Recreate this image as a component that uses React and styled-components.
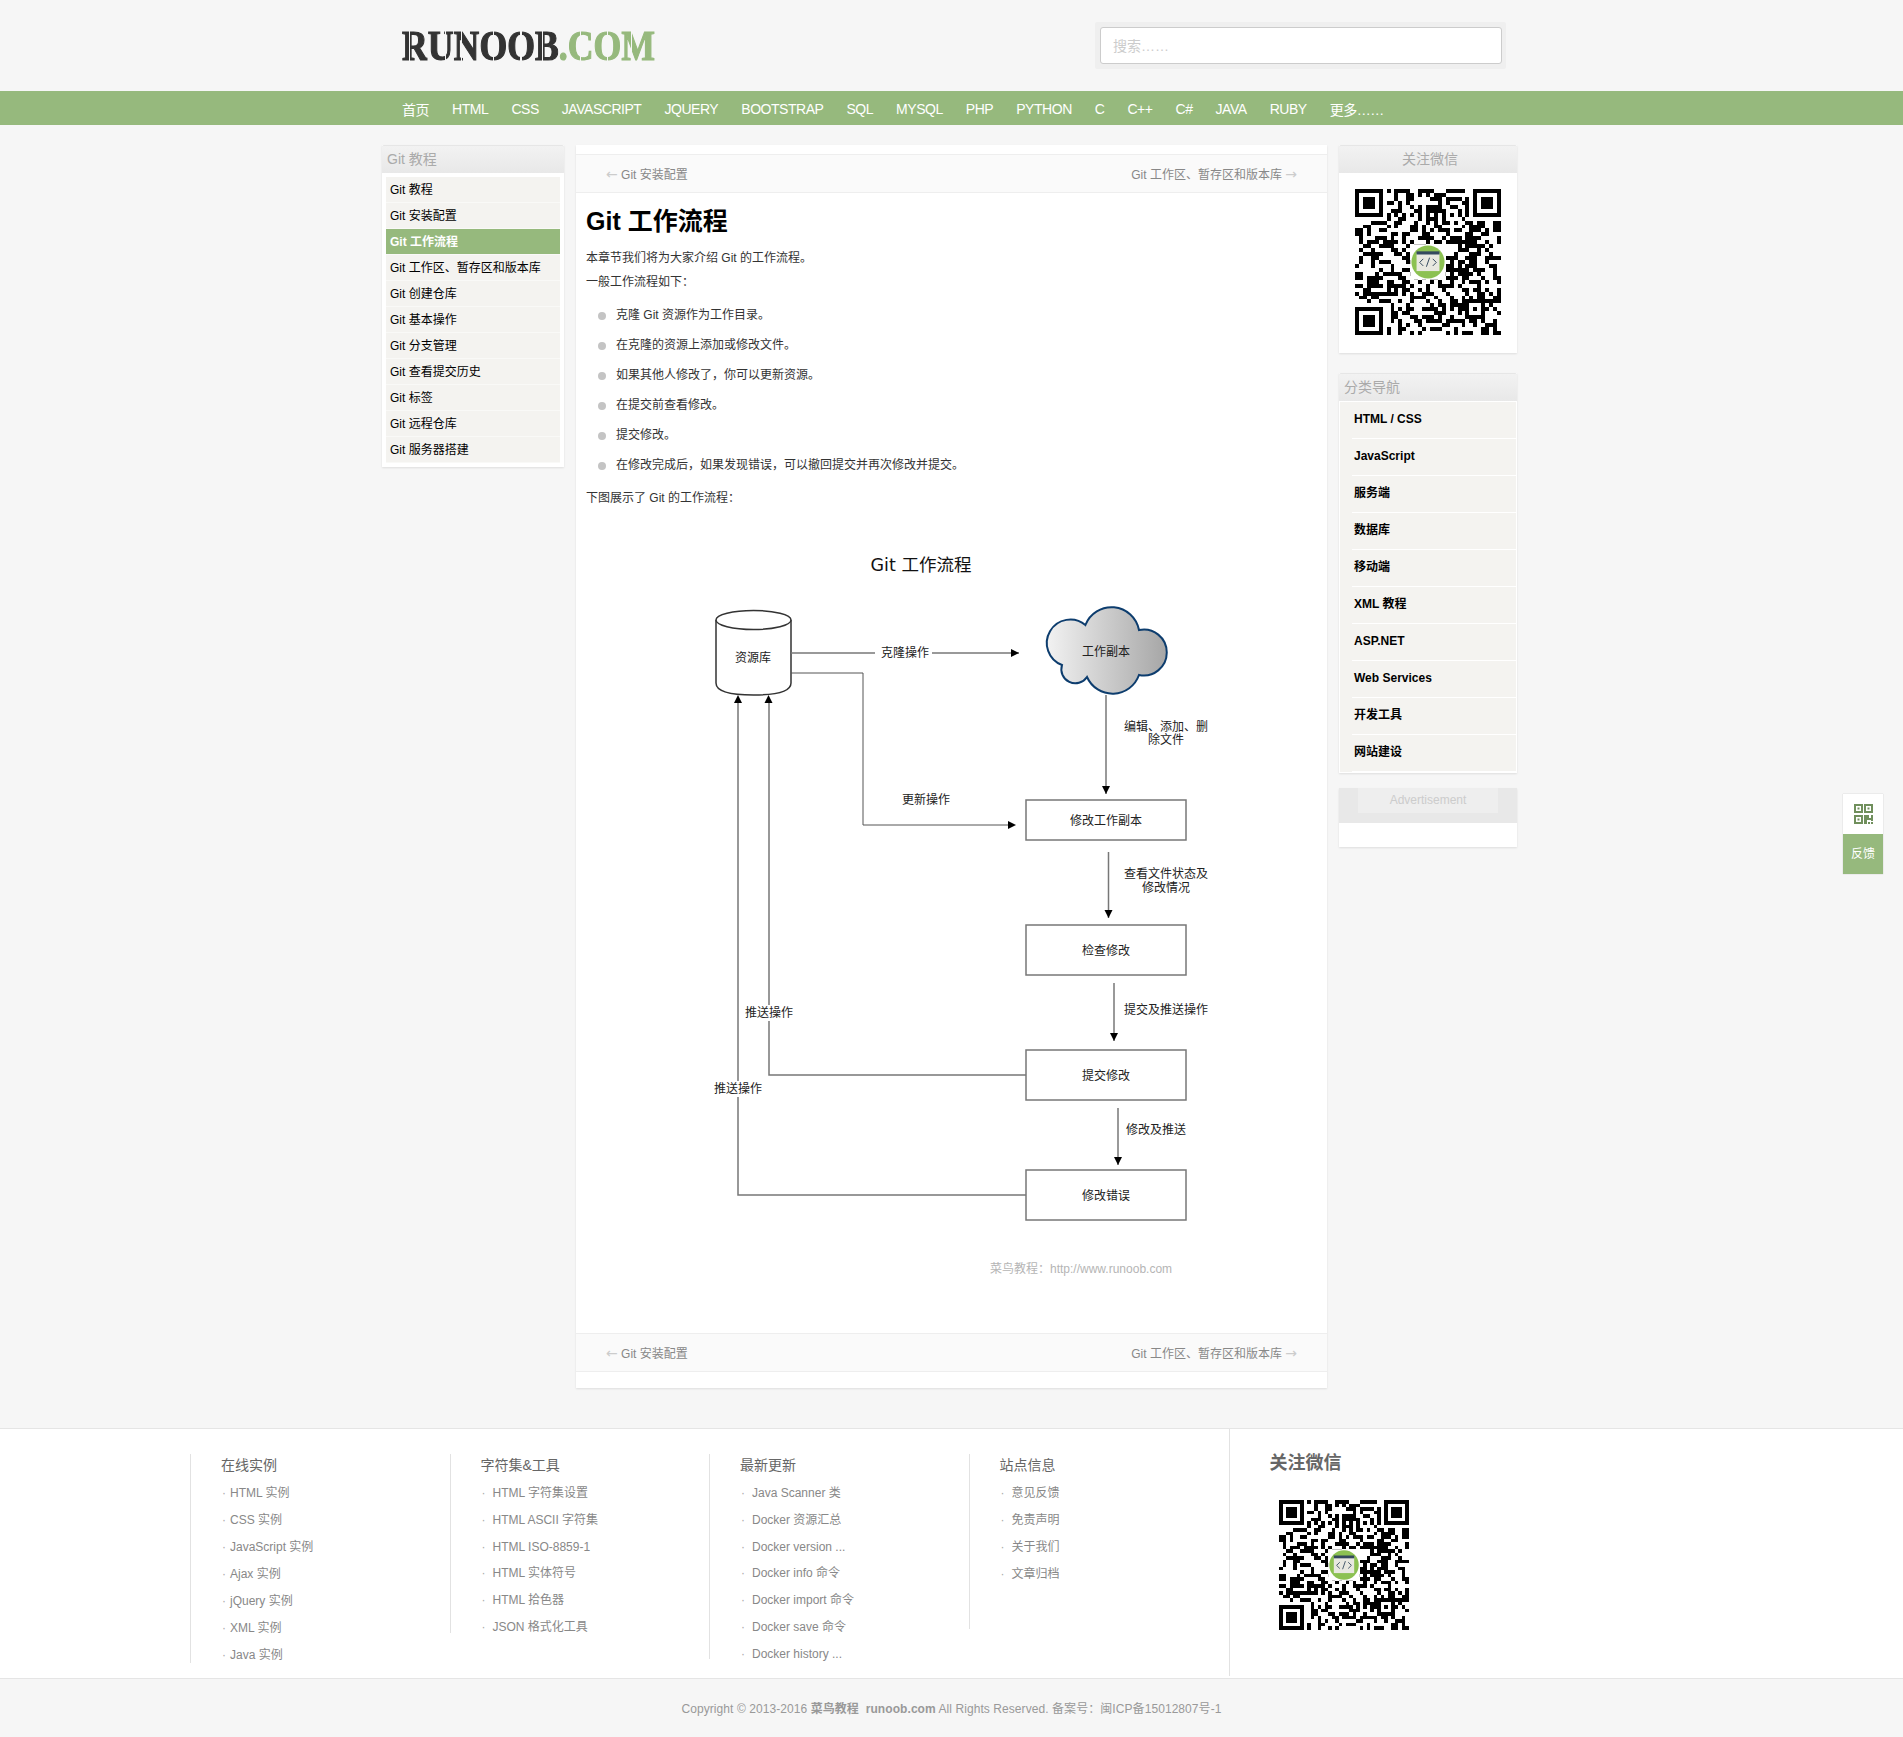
import React from 'react';
import styled, { createGlobalStyle } from 'styled-components';

const GREEN = '#96b97d';
const SANS = '"Liberation Sans", Arial, "Noto Sans CJK SC", sans-serif';

const GlobalStyle = createGlobalStyle`
  html, body {
    margin: 0;
    padding: 0;
    background: #f6f6f6;
    font-family: ${SANS};
    font-size: 12px;
    color: #333;
  }
  ul { margin: 0; padding: 0; list-style: none; }
`;

const Page = styled.div`
  width: 1903px;
  height: 1737px;
  overflow: hidden;
`;

const Masthead = styled.header`
  height: 91px;
  display: flex;
  align-items: flex-start;
  padding-left: 402px;
`;

const Logo = styled.div`
  width: 252px;
  height: 91px;
  line-height: 93px;
  font-family: "Liberation Serif", serif;
  font-weight: 700;
  font-size: 42px;
  color: #333;
  white-space: nowrap;
  -webkit-text-stroke: 1.2px currentColor;
  transform: scaleX(0.85);
  transform-origin: left center;
`;

const LogoGreen = styled.span`
  color: ${GREEN};
`;

// stencil look: a thin slit cut through each letter at $cut percent of its width
const LogoLetter = styled.span`
  display: inline-block;
  mask-image: linear-gradient(
    to right,
    #000 ${p => p.$cut - 2}%,
    transparent ${p => p.$cut - 2}%,
    transparent ${p => p.$cut + 2}%,
    #000 ${p => p.$cut + 2}%
  );
`;

const SearchBox = styled.div`
  margin: 22px 0 0 441px;
  width: 411px;
  height: 47px;
  box-sizing: border-box;
  padding: 5px 4px 5px 5px;
  background: #efefef;
  border-radius: 2px;
`;

const SearchInput = styled.input`
  width: 100%;
  height: 37px;
  box-sizing: border-box;
  padding: 0 12px;
  border: 1px solid #ccc;
  border-radius: 3px;
  background: #fff;
  font-family: ${SANS};
  font-size: 14px;

  &::placeholder {
    color: #ccc;
  }
`;

const NavBar = styled.nav`
  height: 34px;
  background: ${GREEN};
  display: flex;
  gap: 23px;
  padding-left: 402px;
  align-items: center;
`;

const NavLink = styled.a`
  font-size: 14px;
  letter-spacing: -0.46px;
  color: #fff;
  padding-top: 2px;
  white-space: nowrap;
`;

const Main = styled.main`
  margin: 20px 0 0 382px;
  display: grid;
  grid-template-columns: 182px 751px 178px;
  column-gap: 12px;
  align-items: start;
`;

const Column = styled.aside`
  display: flex;
  flex-direction: column;
  gap: 20px;
`;

const Card = styled.section`
  background: #fff;
  box-shadow: 0 1px 2px rgba(0, 0, 0, 0.1);
`;

const CardTitle = styled.h4`
  margin: 0;
  height: 28px;
  line-height: 27px;
  box-sizing: border-box;
  padding: 0 5px;
  border-top: 1px solid #e6e6e6;
  border-radius: 2px 2px 0 0;
  background: linear-gradient(#f2f2f2, #e8e8e8);
  font-size: 14px;
  font-weight: 400;
  color: #aaa;
  text-align: ${p => (p.$center ? 'center' : 'left')};
  text-indent: ${p => (p.$center ? 4 : 0)}px;
`;

const TocList = styled.ul`
  padding: 4px;
`;

const TocItem = styled.li`
  height: 26px;
  line-height: 26px;
  box-sizing: border-box;
  padding-left: 4px;
  border-bottom: 1px solid #f9f9f7;
  background: ${p => (p.$active ? GREEN : '#f4f3f0')};
  color: ${p => (p.$active ? '#fff' : '#000')};
  font-weight: ${p => (p.$active ? 700 : 400)};
`;

const Article = styled.article`
  background: #fff;
  height: 1243px;
  padding-top: 9px;
  box-sizing: border-box;
  box-shadow: 0 1px 2px rgba(0, 0, 0, 0.1);
`;

const PageNav = styled.div`
  height: 39px;
  box-sizing: border-box;
  padding: 0 30px;
  display: flex;
  justify-content: space-between;
  align-items: center;
  background: #fafafa;
  border-top: 1px solid #eee;
  border-bottom: 1px solid #eee;
  color: #888;
`;

const NavArrow = styled.i`
  font-family: "DejaVu Sans", sans-serif;
  font-style: normal;
  font-size: 14px;
  line-height: 12px;
  color: #ccc;
`;

const ArticleBody = styled.div`
  padding: 0 10px;
`;

const Heading = styled.h1`
  margin: 10px 0 0;
  height: 36px;
  line-height: 36px;
  font-size: 25px;
  font-weight: 700;
  color: #000;
`;

const Para = styled.p`
  margin: 0;
  height: 24px;
  line-height: 24px;
`;

const IntroPara = styled(Para)`
  margin-top: 7px;
`;

const Steps = styled.ul`
  margin: 6px 0;
`;

const Step = styled.li`
  height: 30px;
  line-height: 30px;
  padding-left: 30px;
  position: relative;

  &::before {
    content: '';
    position: absolute;
    left: 12px;
    top: 12px;
    width: 8px;
    height: 8px;
    border-radius: 50%;
    background: #c4c4c4;
  }
`;

const Diagram = styled.svg`
  display: block;
  margin: 13px 0 0 -10px;
  width: 751px;
  height: 810px;
`;

const ChartText = styled.text.attrs({ dy: 1 })`
  font-family: "Liberation Sans", "Noto Sans CJK SC", sans-serif;
  font-size: 12px;
  fill: #222;
  text-anchor: middle;
  dominant-baseline: central;
`;

const QrFrame = styled.div`
  padding: ${p => p.$pad};
  display: flex;
`;

const CatList = styled.ul`
  padding: 1px 1px 1px;
`;

const CatItem = styled.li`
  padding-left: 12px;
  background: #f4f3f0;
`;

const CatLink = styled.a`
  display: block;
  height: 37px;
  line-height: 35px;
  box-sizing: border-box;
  padding-left: 2px;
  border-bottom: 1px solid #fff;
  font-weight: 700;
  color: #000;
`;

const AdCard = styled(Card)`
  margin-top: -5px;
  height: 59px;
`;

const AdHead = styled.div`
  height: 35px;
  background: #e8e8e8;
  display: flex;
  justify-content: center;
`;

const AdLabel = styled.div`
  width: 140px;
  height: 25px;
  line-height: 25px;
  background: #eeeeee;
  color: #ccc;
  text-align: center;
`;

const FloatDock = styled.div`
  position: absolute;
  left: 1843px;
  top: 794px;
  width: 40px;
  box-shadow: 0 0 1px rgba(0, 0, 0, 0.25);
`;

const DockQr = styled.div`
  height: 40px;
  background: #fff;
  display: flex;
  align-items: center;
  justify-content: center;
`;

const DockBtn = styled.div`
  height: 40px;
  line-height: 40px;
  background: ${GREEN};
  color: #fff;
  text-align: center;
`;

const Footer = styled.footer`
  margin-top: 40px;
  height: 251px;
  box-sizing: border-box;
  background: #fff;
  border-top: 1px solid #e5e5e5;
  border-bottom: 1px solid #e5e5e5;
  padding-left: 190px;
  display: flex;
  align-items: flex-start;
`;

const LinkCol = styled.div`
  width: 259px;
  height: ${p => p.$height}px;
  margin-top: 25px;
  box-sizing: border-box;
  padding-left: 30px;
  border-left: 1px solid #e2e2e2;
  margin-right: ${p => p.$gap || 0}px;
`;

const LinkTitle = styled.h4`
  margin: 0 0 4px;
  height: 22px;
  line-height: 22px;
  font-size: 14px;
  font-weight: 400;
  color: #666;
`;

const LinkItem = styled.li`
  height: ${p => (p.$ascii ? 26 : 27)}px;
  line-height: ${p => (p.$ascii ? 26 : 27)}px;
  padding-left: ${p => p.$indent}px;
  color: #888;
  position: relative;
  white-space: nowrap;

  &::before {
    content: '·';
    position: absolute;
    left: 1px;
    color: #aaa;
  }
`;

const WechatCol = styled.div`
  width: 300px;
  height: 247px;
  box-sizing: border-box;
  padding-left: 40px;
  border-left: 1px solid #e2e2e2;
`;

const WechatTitle = styled.h4`
  margin: 21px 0 0;
  height: 26px;
  line-height: 26px;
  font-size: 18px;
  font-weight: 700;
  color: #666;
`;

const Copyright = styled.div`
  height: 58px;
  line-height: 61px;
  text-align: center;
  letter-spacing: 0.07px;
  color: #999;

  b {
    font-weight: 700;
  }
`;

// finder + timing + seeded noise, the real code can't be read back from a screenshot anyway
const buildQr = () => {
  const n = 37;
  let s = 20160412;
  const rnd = () => {
    s = (s * 1664525 + 1013904223) % 4294967296;
    return (s >>> 16) & 1;
  };
  const cells = [];
  for (let y = 0; y < n; y++) {
    const row = [];
    for (let x = 0; x < n; x++) row.push(rnd());
    cells.push(row);
  }
  const finder = (ox, oy) => {
    for (let y = -1; y < 8; y++) {
      for (let x = -1; x < 8; x++) {
        const cx = ox + x;
        const cy = oy + y;
        if (cx < 0 || cy < 0 || cx >= n || cy >= n) continue;
        const ring = x === 0 || x === 6 || y === 0 || y === 6;
        const core = x >= 2 && x <= 4 && y >= 2 && y <= 4;
        const inside = x >= 0 && x <= 6 && y >= 0 && y <= 6;
        cells[cy][cx] = inside && (ring || core) ? 1 : 0;
      }
    }
  };
  finder(0, 0);
  finder(n - 7, 0);
  finder(0, n - 7);
  for (let i = 8; i < n - 8; i++) {
    cells[6][i] = (i + 1) % 2;
    cells[i][6] = (i + 1) % 2;
  }
  for (let y = -2; y <= 2; y++) {
    for (let x = -2; x <= 2; x++) {
      cells[30 + y][30 + x] = Math.max(Math.abs(x), Math.abs(y)) !== 1 ? 1 : 0;
    }
  }
  let d = '';
  cells.forEach((row, y) => row.forEach((on, x) => {
    if (on) d += `M${x} ${y}h1v1h-1z`;
  }));
  return d;
};

const QR_PATH = buildQr();

const QrCode = ({ size }) => (
  <svg width={size} height={size} viewBox="0 0 37 37" shapeRendering="crispEdges">
    <path d={QR_PATH} fill="#000" />
    <g shapeRendering="auto">
      <rect x="14" y="14" width="9" height="9" rx="1" fill="#fff" />
      <circle cx="18.5" cy="18.5" r="4.2" fill="#8cc152" />
      <rect x="15.6" y="16.3" width="5.8" height="4.5" fill="#e8e8e0" />
      <rect x="15.6" y="15.8" width="5.8" height="0.8" fill="#34495e" />
      <path d="M17.3 17.7l-.9.9.9.9M19.7 17.7l.9.9-.9.9M18.9 17.4l-.8 2.3" fill="none" stroke="#34495e" strokeWidth="0.25" />
    </g>
  </svg>
);

const Arrow = ({ x1, y1, x2, y2, width = 1.5, color = '#777' }) => {
  const down = y2 > y1;
  const up = y2 < y1;
  let head;
  if (down) head = `${x2 - 4},${y2 - 8} ${x2 + 4},${y2 - 8} ${x2},${y2}`;
  else if (up) head = `${x2 - 4},${y2 + 8} ${x2 + 4},${y2 + 8} ${x2},${y2}`;
  else head = `${x2 - 8},${y2 - 4} ${x2 - 8},${y2 + 4} ${x2},${y2}`;
  return (
    <g>
      <line x1={x1} y1={y1} x2={x2} y2={y2} stroke={color} strokeWidth={width} />
      <polygon points={head} fill="#000" />
    </g>
  );
};

const FlowBox = ({ y, h, label }) => (
  <g>
    <rect x="1026" y={y} width="160" height={h} fill="#fff" stroke="#777" strokeWidth="1.5" />
    <ChartText x="1106" y={y + h / 2}>{label}</ChartText>
  </g>
);

const Gap = ({ x, y, w, h }) => <rect x={x} y={y} width={w} height={h} fill="#fff" />;

const FlowChart = () => (
  <Diagram viewBox="576 523 751 810">
    <defs>
      <linearGradient id="cloudFill" x1="0" x2="1" y1="0" y2="0">
        <stop offset="0" stopColor="#f2f2f2" />
        <stop offset="1" stopColor="#a6a6a6" />
      </linearGradient>
    </defs>
    <text x="921" y="565" textAnchor="middle" dominantBaseline="central" fontFamily='"DejaVu Sans", "Noto Sans CJK SC", sans-serif' fontSize="17.5" fill="#111">Git 工作流程</text>

    <path d="M716 620V683Q716 695 753.5 695T791 683V620" fill="#fff" stroke="#333" strokeWidth="1.5" />
    <ellipse cx="753.5" cy="620" rx="37.5" ry="9.5" fill="#fff" stroke="#333" strokeWidth="1.5" />
    <ChartText x="753" y="657">资源库</ChartText>

    <Arrow x1={791} y1={653} x2={1019} y2={653} />
    <Gap x={875} y={645} w={57} h={16} />
    <ChartText x="905" y="652">克隆操作</ChartText>

    <path d="M791 673H863V825H1010" fill="none" stroke="#555" strokeWidth="1" />
    <polygon points="1008,821 1008,829 1016,825" fill="#000" />
    <ChartText x="926" y="799">更新操作</ChartText>

    <path d="M1085.4 625A28 28 0 0 1 1139 630A23 23 0 1 1 1139 675A28 28 0 0 1 1087 677A14 14 0 0 1 1062 665A23.5 23.5 0 1 1 1085.4 625Z" fill="url(#cloudFill)" stroke="#0d3d6e" strokeWidth="2" />
    <ChartText x="1106" y="651">工作副本</ChartText>

    <Arrow x1={1106} y1={695} x2={1106} y2={794} />
    <ChartText x="1166" y="726">编辑、添加、删</ChartText>
    <ChartText x="1166" y="739">除文件</ChartText>

    <FlowBox y={800} h={40} label="修改工作副本" />
    <Arrow x1={1108.5} y1={852} x2={1108.5} y2={918} />
    <ChartText x="1166" y="873">查看文件状态及</ChartText>
    <ChartText x="1166" y="887">修改情况</ChartText>

    <FlowBox y={925} h={50} label="检查修改" />
    <Arrow x1={1114} y1={983} x2={1114} y2={1041} />
    <ChartText x="1166" y="1009">提交及推送操作</ChartText>

    <FlowBox y={1050} h={50} label="提交修改" />
    <Arrow x1={1118} y1={1108} x2={1118} y2={1165} />
    <ChartText x="1156" y="1129">修改及推送</ChartText>

    <FlowBox y={1170} h={50} label="修改错误" />

    <path d="M1026 1075H769V700" fill="none" stroke="#777" strokeWidth="1.5" />
    <polygon points="764.5,703 772.5,703 768.5,695" fill="#000" />
    <Gap x={748} y={1005} w={42} h={16} />
    <ChartText x="769" y="1012">推送操作</ChartText>

    <path d="M1026 1195H738V700" fill="none" stroke="#777" strokeWidth="1.5" />
    <polygon points="734,703 742,703 738,695" fill="#000" />
    <Gap x={716} y={1081} w={44} h={16} />
    <ChartText x="738" y="1088">推送操作</ChartText>

    <text x="990" y="1269" dominantBaseline="central" fontFamily='"Liberation Sans", "Noto Sans CJK SC", sans-serif' fontSize="12" fill="#b5b5b5">菜鸟教程：http://www.runoob.com</text>
  </Diagram>
);

const QrIcon = () => (
  <svg width="19" height="20" viewBox="0 0 19 20" fill="#708f5c">
    <path d="M0 0h9v9H0zM2 2v5h5V2zM10 0h9v9h-9zM12 2v5h5V2zM0 11h9v9H0zM2 13v5h5v-5z" fillRule="evenodd" />
    <path d="M3.5 3.5h2v2h-2zM13.5 3.5h2v2h-2zM3.5 14.5h2v2h-2zM10 11h5v3h2v-3h2v6h-2v-1h-4v4h-3zM14 18h2v2h-2zM17 18h2v2h-2z" />
  </svg>
);

const LOGO_DARK = [['R', 30], ['U', 68], ['N', 30], ['O', 50], ['O', 50], ['B', 34]];
const LOGO_GREEN = [['C', 50], ['O', 50], ['M', 30]];

const TOC = ['Git 教程', 'Git 安装配置', 'Git 工作流程', 'Git 工作区、暂存区和版本库', 'Git 创建仓库', 'Git 基本操作', 'Git 分支管理', 'Git 查看提交历史', 'Git 标签', 'Git 远程仓库', 'Git 服务器搭建'];
const NAV = ['首页', 'HTML', 'CSS', 'JAVASCRIPT', 'JQUERY', 'BOOTSTRAP', 'SQL', 'MYSQL', 'PHP', 'PYTHON', 'C', 'C++', 'C#', 'JAVA', 'RUBY', '更多……'];
const STEPS = ['克隆 Git 资源作为工作目录。', '在克隆的资源上添加或修改文件。', '如果其他人修改了，你可以更新资源。', '在提交前查看修改。', '提交修改。', '在修改完成后，如果发现错误，可以撤回提交并再次修改并提交。'];
const CATS = ['HTML / CSS', 'JavaScript', '服务端', '数据库', '移动端', 'XML 教程', 'ASP.NET', 'Web Services', '开发工具', '网站建设'];
const FOOT = [
  { title: '在线实例', height: 209, indent: 9, items: ['HTML 实例', 'CSS 实例', 'JavaScript 实例', 'Ajax 实例', 'jQuery 实例', 'XML 实例', 'Java 实例'] },
  { title: '字符集&工具', height: 179, indent: 12, items: ['HTML 字符集设置', 'HTML ASCII 字符集', 'HTML ISO-8859-1', 'HTML 实体符号', 'HTML 拾色器', 'JSON 格式化工具'] },
  { title: '最新更新', height: 205, indent: 12, items: ['Java Scanner 类', 'Docker 资源汇总', 'Docker version ...', 'Docker info 命令', 'Docker import 命令', 'Docker save 命令', 'Docker history ...'] },
  { title: '站点信息', height: 175, indent: 12, items: ['意见反馈', '免责声明', '关于我们', '文章归档'] },
];

const ArticleNav = () => (
  <PageNav>
    <span><NavArrow>←</NavArrow> Git 安装配置</span>
    <span>Git 工作区、暂存区和版本库 <NavArrow>→</NavArrow></span>
  </PageNav>
);

export default function App() {
  return (
    <Page>
      <GlobalStyle />
      <Masthead>
        <Logo>
          {LOGO_DARK.map(([ch, cut], i) => <LogoLetter key={i} $cut={cut}>{ch}</LogoLetter>)}
          <LogoGreen>
            .{LOGO_GREEN.map(([ch, cut], i) => <LogoLetter key={i} $cut={cut}>{ch}</LogoLetter>)}
          </LogoGreen>
        </Logo>
        <SearchBox>
          <SearchInput placeholder="搜索……" />
        </SearchBox>
      </Masthead>
      <NavBar>
        {NAV.map(item => <NavLink key={item}>{item}</NavLink>)}
      </NavBar>

      <Main>
        <Card>
          <CardTitle>Git 教程</CardTitle>
          <TocList>
            {TOC.map(item => (
              <TocItem key={item} $active={item === 'Git 工作流程'}>{item}</TocItem>
            ))}
          </TocList>
        </Card>

        <Article>
          <ArticleNav />
          <ArticleBody>
            <Heading>Git 工作流程</Heading>
            <IntroPara>本章节我们将为大家介绍 Git 的工作流程。</IntroPara>
            <Para>一般工作流程如下：</Para>
            <Steps>
              {STEPS.map(step => <Step key={step}>{step}</Step>)}
            </Steps>
            <Para>下图展示了 Git 的工作流程：</Para>
            <FlowChart />
          </ArticleBody>
          <ArticleNav />
        </Article>

        <Column>
          <Card>
            <CardTitle $center>关注微信</CardTitle>
            <QrFrame $pad="16px 16px 18px">
              <QrCode size={146} />
            </QrFrame>
          </Card>
          <Card>
            <CardTitle>分类导航</CardTitle>
            <CatList>
              {CATS.map(cat => (
                <CatItem key={cat}><CatLink>{cat}</CatLink></CatItem>
              ))}
            </CatList>
          </Card>
          <AdCard>
            <AdHead><AdLabel>Advertisement</AdLabel></AdHead>
          </AdCard>
        </Column>
      </Main>

      <Footer>
        {FOOT.map((col, i) => (
          <LinkCol key={col.title} $height={col.height} $gap={i === 3 ? 1 : 0.5}>
            <LinkTitle>{col.title}</LinkTitle>
            <ul>
              {col.items.map(item => (
                <LinkItem key={item} $indent={col.indent} $ascii={!/[^\x00-\x7f]/.test(item)}>{item}</LinkItem>
              ))}
            </ul>
          </LinkCol>
        ))}
        <WechatCol>
          <WechatTitle>关注微信</WechatTitle>
          <QrFrame $pad="24px 0 0 9px">
            <QrCode size={130} />
          </QrFrame>
        </WechatCol>
      </Footer>
      <Copyright>Copyright © 2013-2016 <b>菜鸟教程</b>&nbsp; <b>runoob.com</b> All Rights Reserved. 备案号：闽ICP备15012807号-1</Copyright>

      <FloatDock>
        <DockQr><QrIcon /></DockQr>
        <DockBtn>反馈</DockBtn>
      </FloatDock>
    </Page>
  );
}
